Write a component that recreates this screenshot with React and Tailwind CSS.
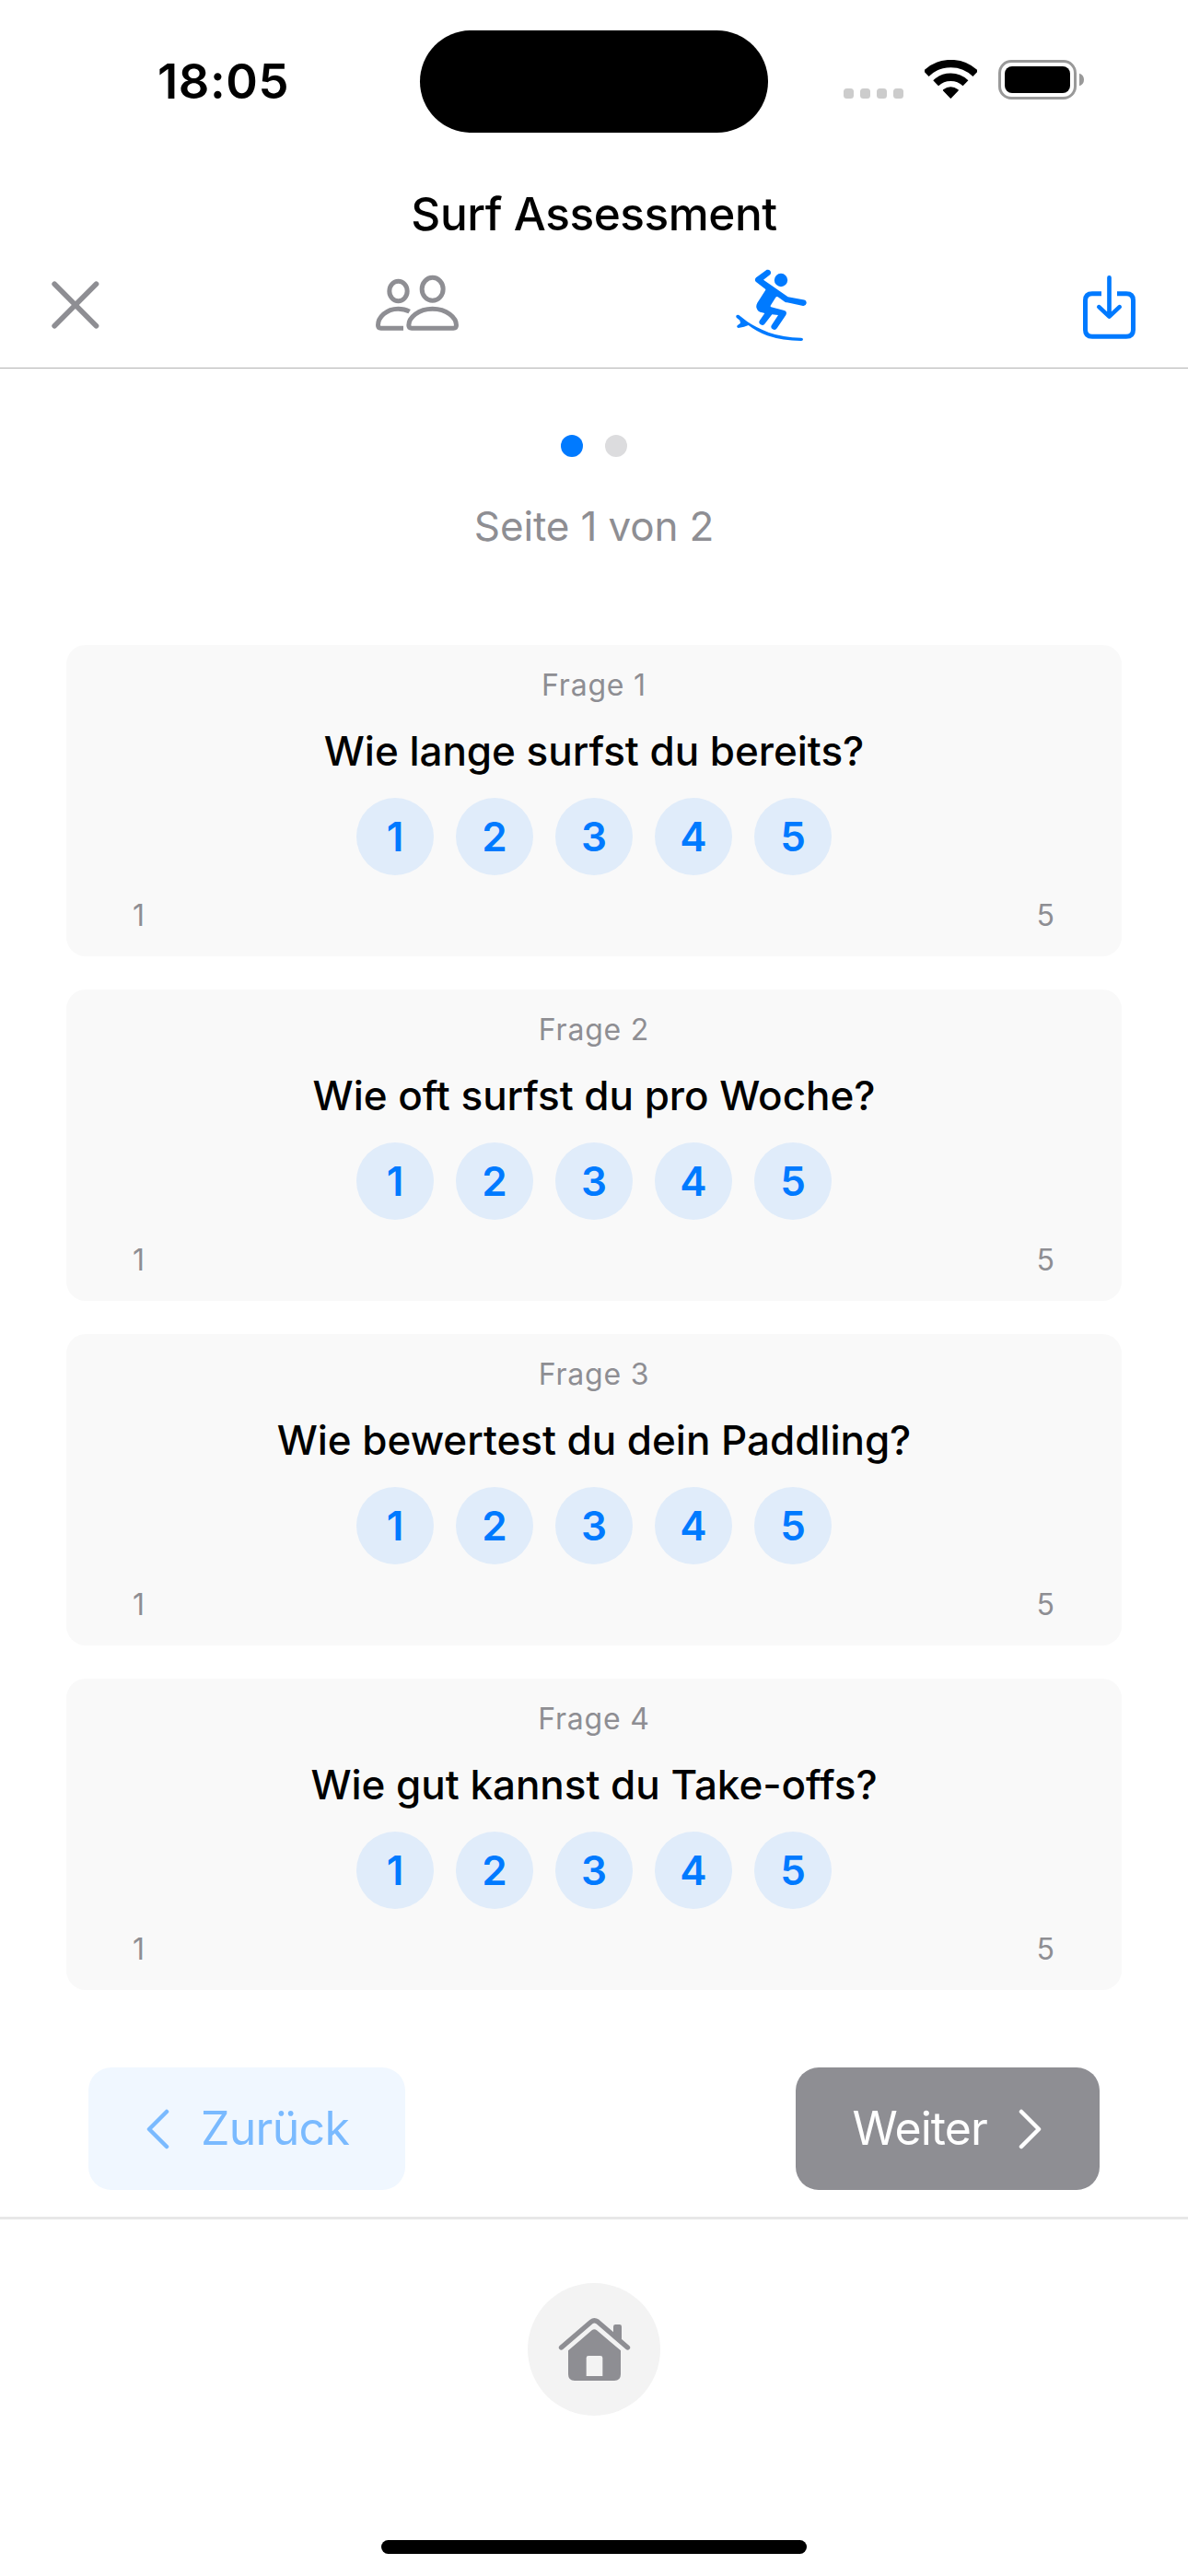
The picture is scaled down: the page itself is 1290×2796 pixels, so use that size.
const QUESTIONS = [
  "Wie lange surfst du bereits?",
  "Wie oft surfst du pro Woche?",
  "Wie bewertest du dein Paddling?",
  "Wie gut kannst du Take-offs?",
];

function StatusBar() {
  return (
    <div className="flex h-[177px] items-start">
      <div className="flex w-[456px] justify-center pt-[58px] pl-[29px]">
        <span className="text-[52.5px] leading-[60px] font-semibold tracking-[0.6px]">18:05</span>
      </div>
      <div className="mt-[33px] h-[111px] w-[378px] rounded-full bg-black" />
      <div className="mt-[65px] flex h-[43px] grow items-end pl-[82px]">
        <div className="mb-px flex gap-[7px]">
          {[0, 1, 2, 3].map((i) => (
            <span key={i} className="size-[11px] rounded-[3.5px] bg-[#cccccc]" />
          ))}
        </div>
        <svg className="ml-[23px] h-[43px] w-[57px]" viewBox="342 75 171 129" fill="none" stroke="#000">
          <path d="M347 120 A115 115 0 0 1 508 120" strokeWidth="25" />
          <path d="M378.500 151 A69.500 69.500 0 0 1 475.500 151" strokeWidth="25" />
          <path d="M427 198 L404 174 Q427 156 450 174 Z" fill="#000" strokeWidth="5" strokeLinejoin="round" />
        </svg>
        <svg className="ml-[23px] h-[43px] w-[93px]" viewBox="582 75 279 129">
          <rect x="586.500" y="79.500" width="246" height="120" rx="38" fill="none" stroke="#999999" strokeWidth="9" />
          <rect x="603" y="96" width="213" height="87" rx="24" />
          <path d="M846 119 Q861 124 861 139.500 Q861 155 846 160 Z" fill="#999999" />
        </svg>
      </div>
    </div>
  );
}

function CloseIcon() {
  return (
    <svg className="h-[84px] w-[52px]" viewBox="48 0 156 252" stroke="#8e8e93" strokeWidth="17" strokeLinecap="round">
      <path d="M57.500 54.500 L193.500 191 M193.500 54.500 L57.500 191" />
    </svg>
  );
}

function PeopleIcon() {
  return (
    <svg className="h-[84px] w-[90px]" viewBox="84 60 270 252" fill="none" stroke="#8e8e93" strokeWidth="15">
      <ellipse cx="157.500" cy="138" rx="29" ry="32.500" />
      <ellipse cx="269" cy="131.500" rx="34.500" ry="37.500" />
      <path d="M191.500 249 C191.500 224 223 195.500 269 195.500 C315 195.500 346.500 224 346.500 249 Q346.500 258.500 337 258.500 H201 Q191.500 258.500 191.500 249 Z" />
      <path d="M174 258.500 H101 Q91.500 258.500 91.500 249 C91.500 224 118 195.500 157 195.500 C171 195.500 184 199 194 204.500" />
    </svg>
  );
}

function SurfIcon() {
  return (
    <svg className="h-[84px] w-[77px]" viewBox="57 30 231 252" fill="#007aff">
      <circle cx="204" cy="72" r="21.500" />
      <path d="M158 38.500 L123 64 Q116 71 123 78 L153 101 Q155 103 153 106 L127 146 Q123 153 124 161 Q128 176 143 178 L151 180 L135 203 A10 10 0 0 0 152 214 L175 184 L195 186 L174 218 A10 10 0 0 0 191 229 L220 186 Q226 173 212 170 L172 160 Q168 158 171 154 L187 128 Q190 124 194 127 L217 143 Q220 145 224 145 L276 156 A10 10 0 0 0 280 136.500 L227 127 L147 71 L169 54 A10 10 0 0 0 158 38.500 Z" />
      <path d="M60 186 Q65 183 70 188 L94 207 Q120 225 165 243 Q210 259 270 260 Q276 261 276 265 Q276 270 270 270 Q210 270 160 253 Q125 240 98 219 Q86 225 65 228 Q58 226 62 220 L72 212 L70 203 L59 194 Q56 189 60 186 Z" />
    </svg>
  );
}

function SaveIcon() {
  return (
    <svg className="h-[84px] w-[57px]" viewBox="48 30 171 252" fill="none" stroke="#007aff" strokeWidth="15">
      <path d="M108 116 H78 Q55.500 116 55.500 138 V234 Q55.500 256 78 256 H189 Q211.500 256 211.500 234 V138 Q211.500 116 189 116 H159" />
      <path d="M133.500 64 V188 M100 159.500 L133.500 191 L167 159.500" strokeWidth="14" strokeLinecap="round" strokeLinejoin="round" />
    </svg>
  );
}

function Header() {
  return (
    <header className="border-b border-[#b3b3b3]">
      <StatusBar />
      <h1 className="mt-[25px] text-center text-[49.5px] leading-[60px] font-medium tracking-[-0.45px]">Surf Assessment</h1>
      <div className="mt-[28px] mb-[25px] flex justify-between pr-[57px] pl-[56px]">
        <CloseIcon />
        <PeopleIcon />
        <SurfIcon />
        <SaveIcon />
      </div>
    </header>
  );
}

function QuestionCard({ number, text }) {
  return (
    <section className="flex h-[338px] flex-col items-center rounded-[21px] bg-[#f9f9f9] pt-[14px]">
      <p className="text-[32px] leading-[60px] tracking-[0.8px] text-[#8e8e93]">Frage {number}</p>
      <h2 className="mt-[11px] text-[44px] leading-[60px] font-medium tracking-[-0.03px]">{text}</h2>
      <div className="mt-[21px] flex gap-[24px]">
        {[1, 2, 3, 4, 5].map((n) => (
          <button
            key={n}
            className="flex size-[84px] items-center justify-center rounded-full bg-[#e0ecfa] text-[44px] leading-none font-semibold text-[#007aff]"
          >
            {n}
          </button>
        ))}
      </div>
      <div className="mt-[26px] flex w-full justify-between pr-[73px] pl-[72px] text-[32px] leading-[36px] text-[#8e8e93]">
        <span>1</span>
        <span>5</span>
      </div>
    </section>
  );
}

export default function App() {
  return (
    <div className="flex h-[2796px] w-[1290px] flex-col bg-white font-[Inter,sans-serif] text-black">
      <Header />

      <div className="mt-[72px] flex justify-center gap-[24px]">
        <span className="size-[24px] rounded-full bg-[#007aff]" />
        <span className="size-[24px] rounded-full bg-[#dcdcde]" />
      </div>
      <p className="mt-[48px] text-center text-[44px] leading-[54px] tracking-[-0.15px] text-[#8e8e93]">Seite 1 von 2</p>

      <main className="mt-[102px] flex flex-col gap-[36px] px-[72px]">
        {QUESTIONS.map((text, i) => (
          <QuestionCard key={text} number={i + 1} text={text} />
        ))}
      </main>

      <div className="mt-[84px] flex justify-between px-[96px]">
        <button className="flex h-[133px] w-[344px] items-center rounded-[25px] bg-[#f0f7ff] pl-[62px] text-[50px] tracking-[-0.7px] text-[#7abaff]">
          <svg className="mr-[34px] h-[44px] w-[26px]" viewBox="0 0 26 44" fill="none" stroke="currentColor" strokeWidth="4.500" strokeLinecap="round" strokeLinejoin="round">
            <path d="M23 3 L4 22 L23 41" />
          </svg>
          Zurück
        </button>
        <button className="flex h-[133px] w-[330px] items-center justify-end rounded-[25px] bg-[#8e8e93] pr-[62px] text-[50px] tracking-[-0.9px] text-white">
          Weiter
          <svg className="ml-[34px] h-[44px] w-[26px]" viewBox="0 0 26 44" fill="none" stroke="currentColor" strokeWidth="4.500" strokeLinecap="round" strokeLinejoin="round">
            <path d="M3 3 L22 22 L3 41" />
          </svg>
        </button>
      </div>

      <footer className="mt-[29px] flex flex-col items-center border-t-[3px] border-[#e8e8e8] pt-[69px]">
        <button className="size-[144px] rounded-full bg-[#f3f3f3]">
          <svg className="size-[144px]" viewBox="69 54 432 432" fill="#8e8e93">
            <path d="M178.500 264 L276 180 Q286 172 297 180 L394.500 264" fill="none" stroke="#8e8e93" strokeWidth="16" strokeLinecap="round" />
            <path d="M348 218 V196 Q348 189 355 189 H368 Q375 189 375 196 V244 Z" />
            <path fillRule="evenodd" d="M201 274 L278 208 Q286 202 294 208 L372 274 V351 Q372 372 351 372 H222 Q201 372 201 351 Z M260 357 H313 V298 Q313 291 306 291 H267 Q260 291 260 298 Z" />
          </svg>
        </button>
        <div className="mt-[135px] h-[15px] w-[462px] rounded-full bg-black" />
      </footer>
    </div>
  );
}
